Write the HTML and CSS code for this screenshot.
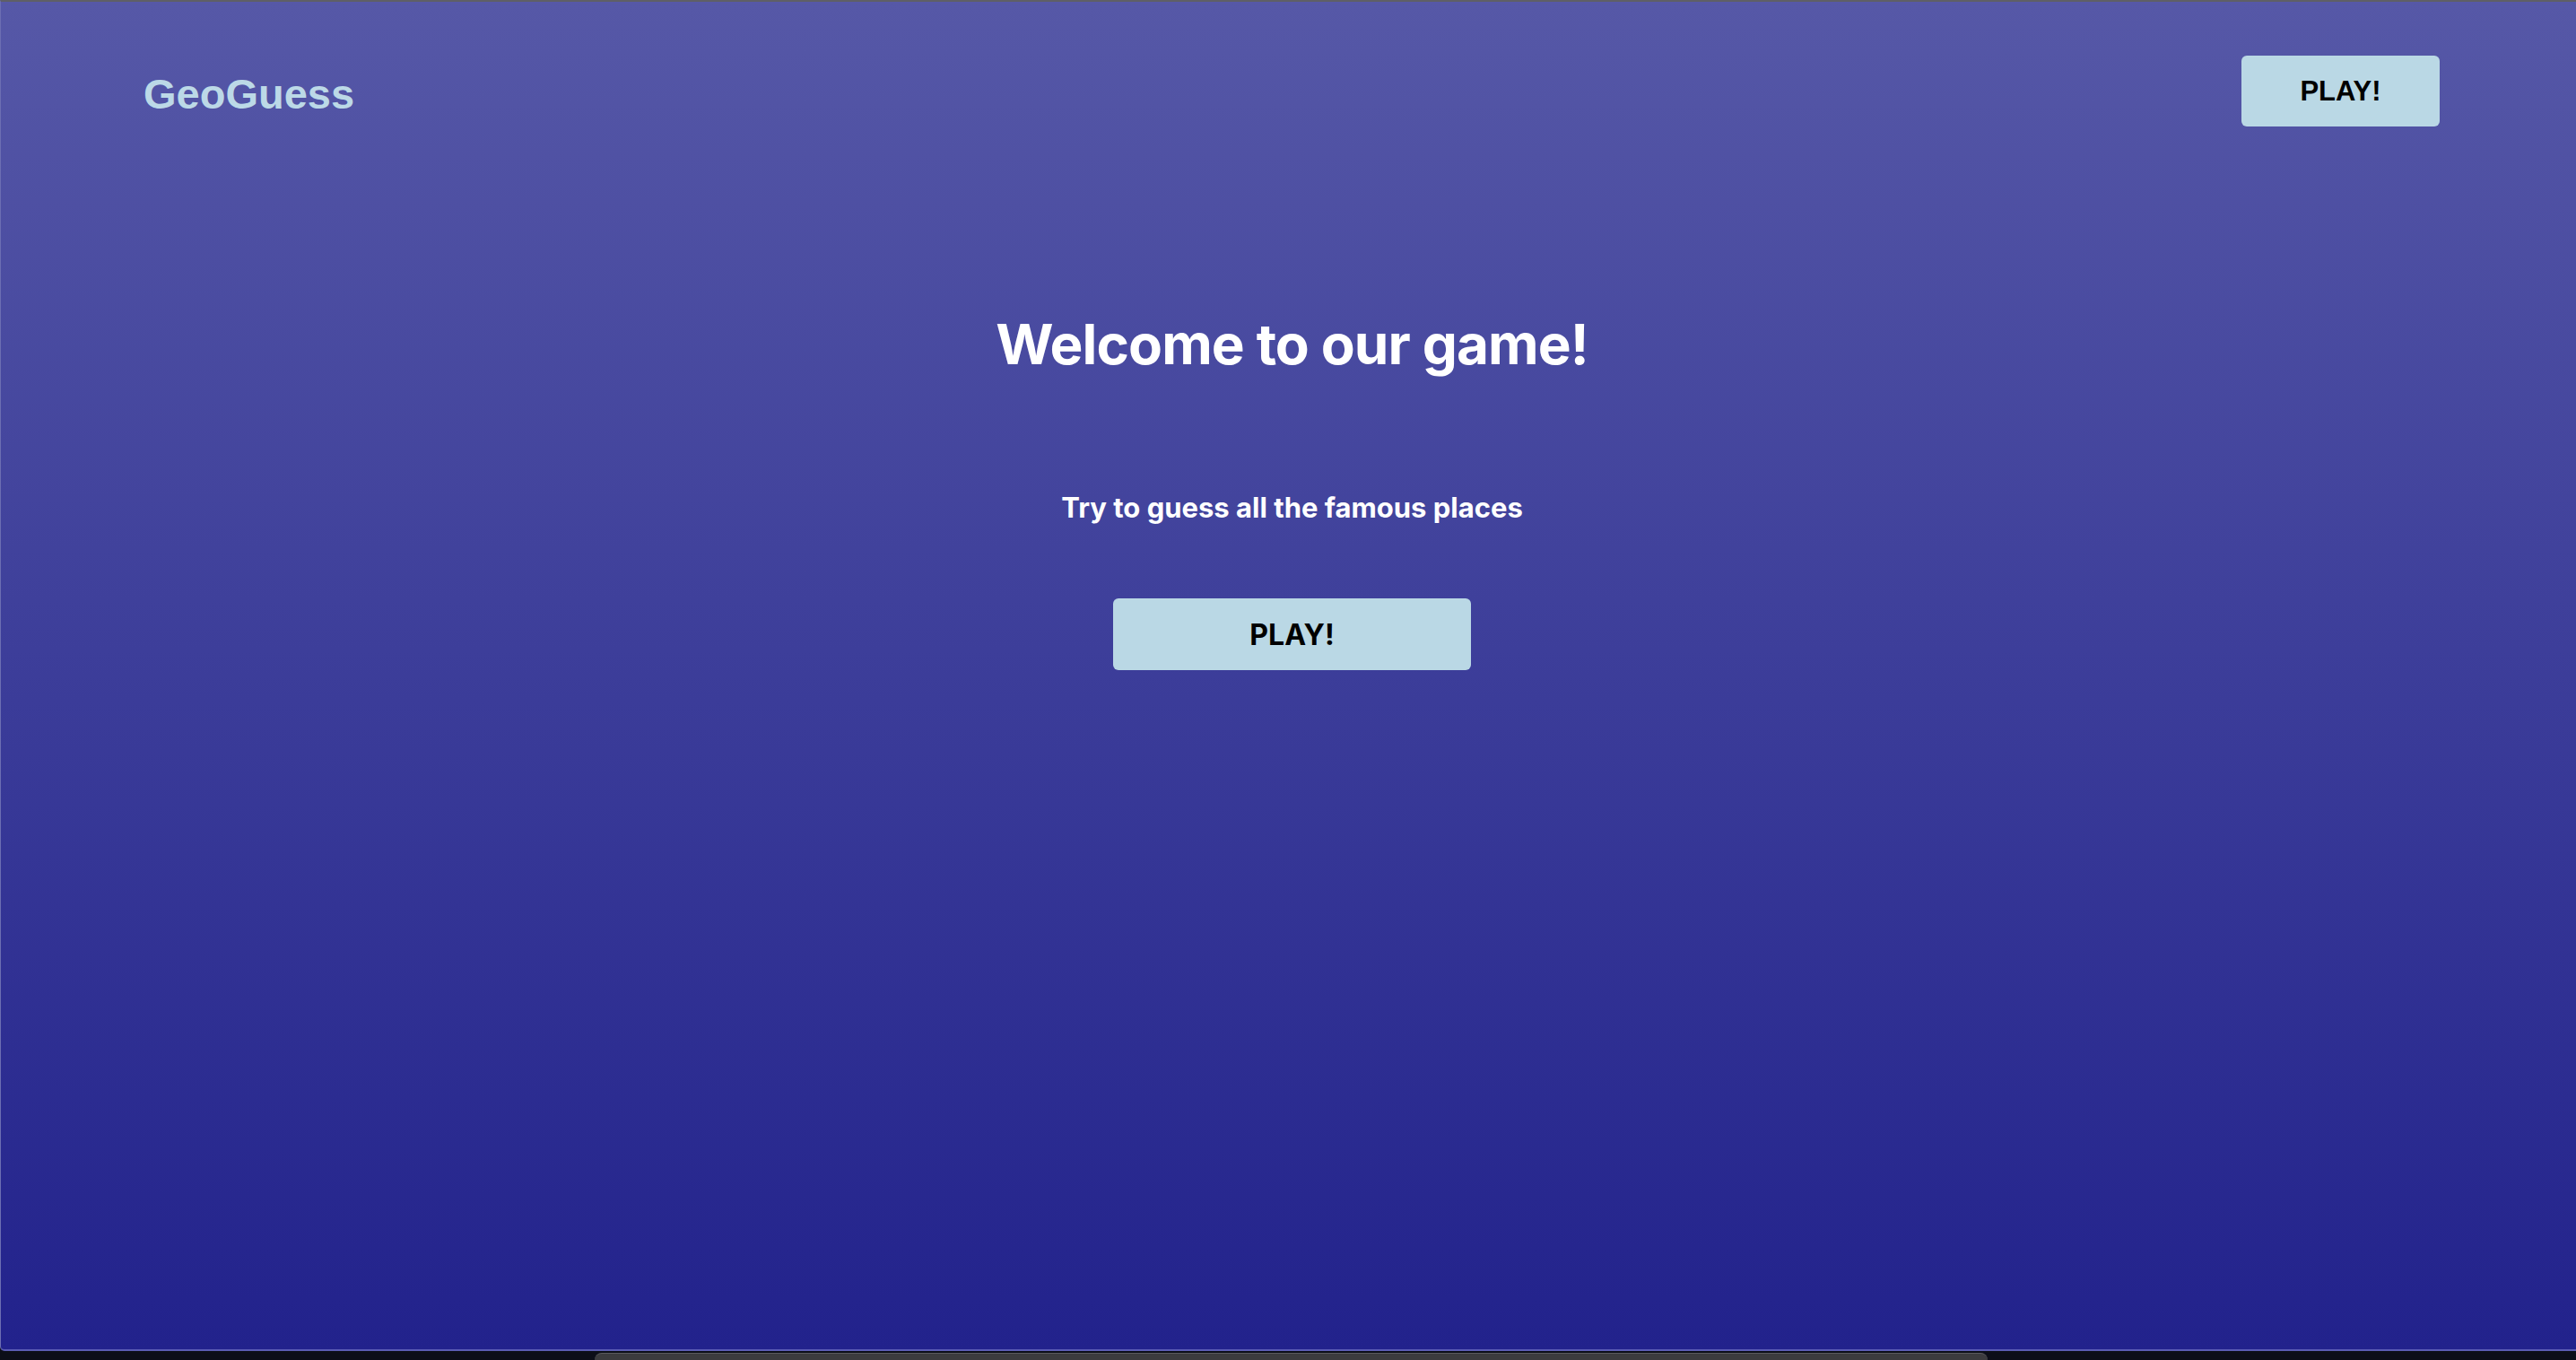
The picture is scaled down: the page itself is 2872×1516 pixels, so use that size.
FILE: index.html
```html
<!DOCTYPE html>
<html lang="en">
<head>
<meta charset="utf-8">
<title>GeoGuess</title>
<link rel="stylesheet" href="styles.css">
</head>
<body>
<div class="screen">
  <div class="window">
    <header class="header">
      <div class="logo">GeoGuess</div>
      <button class="btn btn-top">PLAY!</button>
    </header>
    <main class="hero">
      <h1 class="title">Welcome to our game!</h1>
      <p class="subtitle">Try to guess all the famous places</p>
      <button class="btn btn-main">PLAY!</button>
    </main>
  </div>
  <div class="desk">
    <div class="dock"></div>
  </div>
</div>
</body>
</html>
```

FILE: styles.css
```css
html, body {
  margin: 0;
  padding: 0;
  width: 2872px;
  height: 1516px;
  overflow: hidden;
  background: #0c0e18;
}

.screen {
  display: flex;
  flex-direction: column;
  width: 2872px;
  height: 1516px;
}

.window {
  box-sizing: border-box;
  height: 1506px;
  flex: none;
  display: flex;
  flex-direction: column;
  border-top: 2px solid #5f5f66;
  border-left: 1px solid #6c6eb2;
  border-bottom: 2px solid #5a5cb4;
  border-bottom-left-radius: 5px;
  background: linear-gradient(180deg, #5658a7 0%, #22228c 100%);
}

.header {
  display: flex;
  justify-content: space-between;
  align-items: center;
  padding: 60px 152px 0 159px;
}

.logo {
  font-family: "Liberation Sans", Arial, sans-serif;
  font-weight: 700;
  font-size: 47px;
  line-height: 1;
  color: #bcd9e7;
  margin-top: 5px;
}

.btn {
  border: none;
  background: #bad8e5;
  color: #000;
  border-radius: 6px;
  padding: 0;
  cursor: pointer;
}

.btn-top {
  width: 221px;
  height: 79px;
  font-family: "Liberation Sans", Arial, sans-serif;
  font-weight: 700;
  font-size: 31px;
}

.hero {
  display: flex;
  flex-direction: column;
  align-items: center;
  padding-top: 212px;
  padding-left: 8px;
}

.title {
  margin: 0;
  font-family: Inter, "Liberation Sans", sans-serif;
  font-weight: 700;
  font-size: 62px;
  line-height: 62px;
  color: #ffffff;
  letter-spacing: -0.9px;
}

.subtitle {
  margin: 136px 0 0;
  font-family: Inter, "Liberation Sans", sans-serif;
  font-weight: 700;
  font-size: 31px;
  line-height: 30px;
  color: #ffffff;
}

.btn-main {
  margin-top: 86px;
  width: 399px;
  height: 80px;
  font-family: Inter, "Liberation Sans", sans-serif;
  font-weight: 700;
  font-size: 32px;
}

.desk {
  flex: 1;
  display: flex;
  justify-content: flex-start;
  padding-left: 663px;
  padding-top: 2px;
}

.dock {
  width: 1553px;
  height: 8px;
  background: #3b3b3e;
  border-top: 1px solid #5a5a5e;
  border-radius: 8px 8px 0 0;
}
```
